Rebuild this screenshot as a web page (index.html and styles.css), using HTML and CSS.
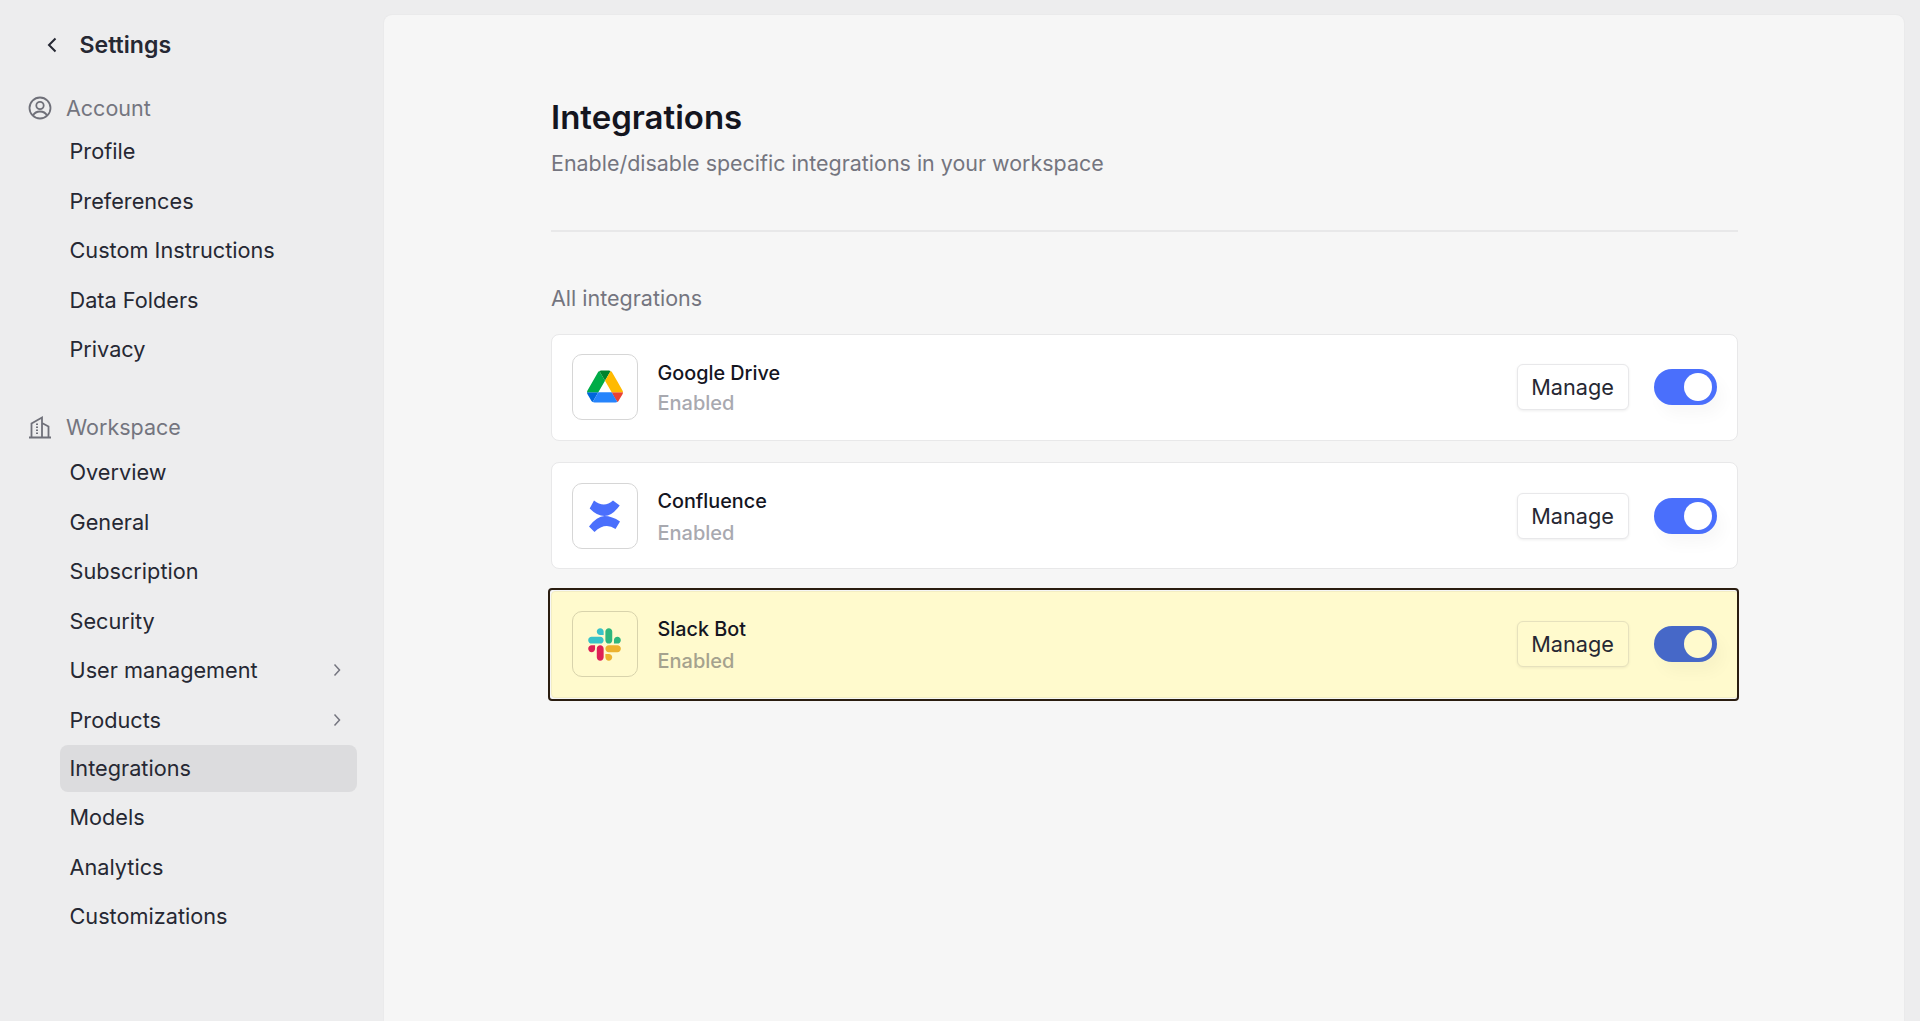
FILE: index.html
```html
<!DOCTYPE html>
<html lang="en">
<head>
    <meta charset="UTF-8">
    <meta name="viewport" content="width=device-width, initial-scale=1.0">
    <title>Integrations</title>
    <link rel="stylesheet" href="styles.css">
</head>
<body>
    <aside class="sidebar">
        <div class="sidebar-head">
            <svg class="back-icon" viewBox="0 0 12 18"><path d="M9.5 2.5 3 9l6.500 6.500"/></svg>
            <span>Settings</span>
        </div>

        <div class="group-title">
            <svg class="group-icon" viewBox="0 0 24 24"><circle cx="12" cy="12" r="10.500"/><circle cx="12" cy="9.500" r="3.700"/><path d="M5 19.500c1.500-2.800 4-4 7-4s5.500 1.200 7 4"/></svg>
            <span>Account</span>
        </div>
        <nav class="nav-list nav-account">
            <a class="nav-item">Profile</a>
            <a class="nav-item">Preferences</a>
            <a class="nav-item">Custom Instructions</a>
            <a class="nav-item">Data Folders</a>
            <a class="nav-item">Privacy</a>
        </nav>

        <div class="group-title group-workspace">
            <svg class="group-icon" viewBox="0 0 24 24"><path d="M1 22.500h22M3.500 22V8.500L14 2.500V22M14 8l6.500 3.500V22"/><path class="dots" d="M9 8.500V20"/></svg>
            <span>Workspace</span>
        </div>
        <nav class="nav-list">
            <a class="nav-item">Overview</a>
            <a class="nav-item">General</a>
            <a class="nav-item">Subscription</a>
            <a class="nav-item">Security</a>
            <a class="nav-item">User management
                <svg class="chevron" viewBox="0 0 8 14"><path d="m1.500 1.500 5 5.500-5 5.500"/></svg>
            </a>
            <a class="nav-item">Products
                <svg class="chevron" viewBox="0 0 8 14"><path d="m1.500 1.500 5 5.500-5 5.500"/></svg>
            </a>
            <a class="nav-item active">Integrations</a>
            <a class="nav-item">Models</a>
            <a class="nav-item">Analytics</a>
            <a class="nav-item">Customizations</a>
        </nav>
    </aside>

    <main class="panel">
        <div class="content">
            <h1>Integrations</h1>
            <p class="subtitle">Enable/disable specific integrations in your workspace</p>
            <hr class="divider">
            <h2>All integrations</h2>

            <div class="card-list">
                <div class="card">
                    <div class="logo-box">
                        <svg class="logo-drive" viewBox="0 0 87.300 78">
                            <path d="m6.600 66.850 3.850 6.650c.8 1.400 1.950 2.500 3.300 3.300l13.750-23.800h-27.500c0 1.550.4 3.100 1.200 4.500z" fill="#0066da"/>
                            <path d="m43.650 25-13.750-23.800c-1.350.8-2.500 1.900-3.300 3.300l-25.400 44a9.060 9.060 0 0 0 -1.200 4.500h27.500z" fill="#00ac47"/>
                            <path d="m73.550 76.800c1.350-.8 2.500-1.900 3.300-3.300l1.600-2.750 7.650-13.250c.8-1.400 1.200-2.950 1.200-4.500h-27.502l5.852 11.500z" fill="#ea4335"/>
                            <path d="m43.650 25 13.750-23.800c-1.350-.8-2.900-1.200-4.500-1.200h-18.500c-1.600 0-3.150.45-4.500 1.200z" fill="#00832d"/>
                            <path d="m59.800 53h-32.300l-13.750 23.800c1.350.8 2.900 1.200 4.500 1.200h50.800c1.600 0 3.150-.45 4.500-1.200z" fill="#2684fc"/>
                            <path d="m73.400 26.500-12.700-22c-.8-1.400-1.950-2.500-3.300-3.300l-13.750 23.800 16.150 28h27.450c0-1.550-.4-3.100-1.200-4.500z" fill="#ffba00"/>
                        </svg>
                    </div>
                    <div class="card-text">
                        <div class="card-name">Google Drive</div>
                        <div class="card-status">Enabled</div>
                    </div>
                    <button class="manage-btn">Manage</button>
                    <div class="toggle"><span class="knob"></span></div>
                </div>

                <div class="card">
                    <div class="logo-box">
                        <svg class="logo-confluence" viewBox="0 0 31 32">
                            <path d="M5 .5Q15 8.500 24 .5L30.700 5.500Q23 16 15.500 16 8 16 .7 8.500Z" fill="#4a6ffc"/>
                            <path d="M0 26.500Q8 16 15.500 16 23 16 31 21.500L26.500 29Q16 22 5.500 32Z" fill="#4a6ffc"/>
                        </svg>
                    </div>
                    <div class="card-text">
                        <div class="card-name">Confluence</div>
                        <div class="card-status">Enabled</div>
                    </div>
                    <button class="manage-btn">Manage</button>
                    <div class="toggle"><span class="knob"></span></div>
                </div>

                <div class="card highlight">
                    <div class="logo-box">
                        <svg class="logo-slack" viewBox="0 0 127 127">
                            <path d="M27.200 80c0 7.300-5.900 13.200-13.200 13.200C6.700 93.200.8 87.300.8 80c0-7.300 5.900-13.200 13.200-13.200h13.200V80zm6.600 0c0-7.300 5.900-13.200 13.200-13.200 7.300 0 13.200 5.900 13.200 13.200v33c0 7.300-5.900 13.200-13.200 13.200-7.300 0-13.200-5.900-13.200-13.200V80z" fill="#de2056"/>
                            <path d="M47 27c-7.300 0-13.200-5.900-13.200-13.200C33.800 6.500 39.700.6 47 .6c7.300 0 13.200 5.900 13.200 13.200V27H47zm0 6.700c7.300 0 13.200 5.900 13.200 13.200 0 7.300-5.900 13.200-13.200 13.200H13.900C6.600 60.100.7 54.200.7 46.900c0-7.300 5.900-13.200 13.200-13.200H47z" fill="#38c2c8"/>
                            <path d="M99.900 46.900c0-7.300 5.900-13.200 13.200-13.200 7.300 0 13.200 5.900 13.200 13.200 0 7.300-5.900 13.200-13.200 13.200H99.900V46.900zm-6.600 0c0 7.300-5.900 13.200-13.200 13.200-7.300 0-13.200-5.900-13.200-13.200V13.800C66.900 6.500 72.800.6 80.100.6c7.300 0 13.200 5.900 13.200 13.200v33.100z" fill="#2eb67d"/>
                            <path d="M80.100 99.800c7.300 0 13.200 5.900 13.200 13.200 0 7.300-5.900 13.200-13.200 13.200-7.300 0-13.200-5.900-13.200-13.200V99.800h13.200zm0-6.600c-7.300 0-13.200-5.900-13.200-13.200 0-7.300 5.900-13.200 13.200-13.200h33.100c7.300 0 13.200 5.900 13.200 13.200 0 7.300-5.900 13.200-13.200 13.200H80.100z" fill="#ecb22e"/>
                        </svg>
                    </div>
                    <div class="card-text">
                        <div class="card-name">Slack Bot</div>
                        <div class="card-status">Enabled</div>
                    </div>
                    <button class="manage-btn">Manage</button>
                    <div class="toggle"><span class="knob"></span></div>
                </div>
            </div>
        </div>
    </main>
</body>
</html>
```
FILE: styles.css
```css
* {
    box-sizing: border-box;
}
html, body {
    height: 100%;
}
body {
    margin: 0;
    display: flex;
    overflow: hidden;
    background-color: #ededee;
    color: #262833;
    font-family: Inter, "Liberation Sans", sans-serif;
}

/* sidebar */
.sidebar {
    flex: none;
    width: 384px;
    padding: 28.500px 0 0 28px;
}
.sidebar-head {
    display: flex;
    align-items: center;
    height: 32px;
    padding-left: 18px;
    font-size: 23.100px;
    font-weight: 600;
}
.back-icon {
    width: 12px;
    height: 18px;
    margin-right: 21.500px;
    fill: none;
    stroke: #262833;
    stroke-width: 2;
}
.group-title {
    display: flex;
    align-items: center;
    gap: 14px;
    height: 30px;
    margin-top: 32px;
    color: #74757f;
    font-size: 21.500px;
}
.group-workspace {
    margin-top: 38.500px;
    margin-bottom: 7px;
}
.group-icon {
    width: 24px;
    height: 24px;
    fill: none;
    stroke: #6f7079;
    stroke-width: 1.800;
}
.group-icon .dots {
    stroke-width: 2;
    stroke-dasharray: 1.500 1.500;
}
.nav-list {
    display: flex;
    flex-direction: column;
    gap: 2px;
    width: 329px;
    margin-top: 4px;
    padding-left: 32px;
}
.nav-account {
    margin-top: 5px;
}
.nav-item {
    display: flex;
    align-items: center;
    justify-content: space-between;
    height: 47.500px;
    padding: 0 16px 0 9.500px;
    border-radius: 8px;
    font-size: 21.700px;
}
.nav-item.active {
    margin: -1px 0 -0.500px;
    background-color: #dcdcde;
}
.chevron {
    width: 8px;
    height: 14px;
    fill: none;
    stroke: #74757f;
    stroke-width: 1.500;
}

/* main panel */
.panel {
    flex: 1;
    margin: 15px 16px 0 0;
    padding: 80px 0 0 167px;
    border-radius: 8px 8px 0 0;
    background-color: #f6f6f6;
    box-shadow: 0 0 2px rgba(0, 0, 0, 0.06);
}
.content {
    width: 1187px;
}
h1 {
    margin: 0;
    color: #14151f;
    font-size: 33px;
    font-weight: 600;
    line-height: 44px;
}
.subtitle {
    margin: 8.500px 0 0;
    color: #74757f;
    font-size: 21.450px;
    line-height: 30px;
}
.divider {
    height: 2px;
    margin: 52px 0 0;
    border: none;
    background-color: #e8e8e9;
}
h2 {
    margin: 52.500px 0 0;
    color: #74757f;
    font-size: 21.500px;
    font-weight: 400;
    line-height: 28px;
}

/* integration cards */
.card-list {
    display: flex;
    flex-direction: column;
    gap: 21.500px;
    margin-top: 21.500px;
}
.card {
    position: relative;
    display: flex;
    align-items: center;
    height: 107px;
    padding: 0 20.500px 0 19.500px;
    border: 1.500px solid #e8e8e9;
    border-radius: 8px;
    background-color: #fff;
}
.card.highlight {
    border-color: #f3eec4;
    border-radius: 4px;
    background-color: #fffacd;
}
/* dark frame drawn over the third row */
.card.highlight::after {
    content: "";
    position: absolute;
    inset: -4px -2px -4px -4px;
    border: 2px solid #2a1d10;
    border-radius: 4px;
}
.logo-box {
    display: flex;
    flex: none;
    align-items: center;
    justify-content: center;
    width: 66px;
    height: 66px;
    border: 1.500px solid #d6d6d6;
    border-radius: 10px;
}
.highlight .logo-box {
    border-color: #d8d3ac;
}
.logo-drive {
    width: 36px;
    height: 33px;
    margin-bottom: 2px;
}
.logo-confluence {
    width: 31px;
    height: 32px;
}
.logo-slack {
    width: 33px;
    height: 33px;
}
.card-text {
    flex: 1;
    margin-left: 20px;
    padding-top: 2px;
}
.card-name {
    color: #14151f;
    font-size: 19.800px;
    font-weight: 450;
    line-height: 26px;
}
.card-status {
    margin-top: 6px;
    color: #a8a9b0;
    font-size: 20px;
    font-weight: 450;
    line-height: 26px;
}
.card:first-child .card-status {
    margin-top: 4px;
}
.highlight .card-status {
    color: #a5a28e;
}
.manage-btn {
    width: 112px;
    height: 46px;
    margin-right: 25px;
    border: 1.500px solid #e8e8ea;
    border-radius: 6px;
    background-color: #fff;
    box-shadow: 0 1px 3px rgba(0, 0, 0, 0.07);
    color: #262833;
    font-family: inherit;
    font-size: 21.700px;
    font-weight: 400;
}
.highlight .manage-btn {
    border-color: #e6e1bd;
    background-color: #fffacd;
}
.toggle {
    display: flex;
    align-items: center;
    justify-content: flex-end;
    width: 63px;
    height: 36px;
    padding-right: 5px;
    border-radius: 18px;
    background-color: #4a6ffc;
    box-shadow: 6px 10px 16px rgba(0, 0, 0, 0.03);
}
.highlight .toggle {
    background-color: #4668c8;
}
.knob {
    width: 28px;
    height: 28px;
    border-radius: 50%;
    background-color: #fff;
}
.highlight .knob {
    background-color: #fffacd;
}
```
